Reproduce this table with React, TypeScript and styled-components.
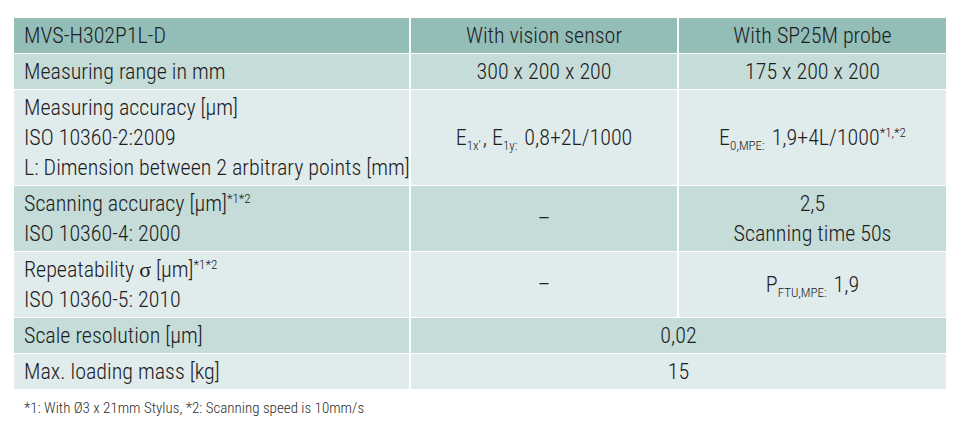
import React from "react";
import styled, {createGlobalStyle} from "styled-components";

const GlobalStyle = createGlobalStyle`
  html, body {
    margin: 0;
    padding: 0;
    background: #ffffff;
  }
  body {
    font-family: "Roboto Condensed", "Liberation Sans Narrow", "Liberation Sans", sans-serif;
    font-weight: 300;
    color: #1c201e;
  }
`

const Page = styled.div`
  padding: 17px 20px 0 14px;
`

const SpecTable = styled.table`
  width: 932px;
  border-collapse: collapse;
  table-layout: fixed;
  font-size: 22px;
  line-height: 30px;
`

type Tone = 'head' | 'mid' | 'light'

const tones: Record<Tone, string> = {
    head: '#93bdb7',
    mid: '#c5dcd8',
    light: '#e0ebeb',
}

const Row = styled.tr<{ $tone: Tone }>`
  background-color: ${props => tones[props.$tone]};
`

const Cell = styled.td<{ $center?: boolean }>`
  border: 2px solid #ffffff;
  border-top-width: 1px;
  border-bottom-width: 1px;
  padding: 3px 10px 2px;
  text-align: ${props => props.$center ? 'center' : 'left'};
  vertical-align: middle;
  white-space: nowrap;

  &:first-child {
    border-left: none;
  }
  &:last-child {
    border-right: none;
  }
`

const Sub = styled.span`
  font-size: 13px;
  line-height: 1;
  position: relative;
  top: 5px;
  margin-right: 2px;
`

const Sup = styled.span`
  font-size: 13px;
  line-height: 1;
  position: relative;
  top: -8px;
`

const Sigma = styled.span`
  font-family: "Liberation Serif", serif;
  font-size: 22px;
  line-height: 1;
`

const Footnote = styled.p`
  margin: 8px 0 0 10px;
  font-size: 15px;
  line-height: 20px;
  color: #2a2e2c;
`

export default function App() {
    return (
        <Page>
            <GlobalStyle/>
            <SpecTable>
                <colgroup>
                    <col style={{width: 396}}/>
                    <col style={{width: 268}}/>
                    <col style={{width: 268}}/>
                </colgroup>
                <tbody>
                <Row $tone="head">
                    <Cell>MVS-H302P1L-D</Cell>
                    <Cell $center>With vision sensor</Cell>
                    <Cell $center>With SP25M probe</Cell>
                </Row>
                <Row $tone="mid">
                    <Cell>Measuring range in mm</Cell>
                    <Cell $center>300 x 200 x 200</Cell>
                    <Cell $center>175 x 200 x 200</Cell>
                </Row>
                <Row $tone="light">
                    <Cell>
                        Measuring accuracy [µm]<br/>
                        ISO 10360-2:2009<br/>
                        L: Dimension between 2 arbitrary points [mm]
                    </Cell>
                    <Cell $center>E<Sub>1x'</Sub>, E<Sub>1y:</Sub> 0,8+2L/1000</Cell>
                    <Cell $center>E<Sub>0,MPE:</Sub> 1,9+4L/1000<Sup>*1,*2</Sup></Cell>
                </Row>
                <Row $tone="mid">
                    <Cell>
                        Scanning accuracy [µm]<Sup>*1*2</Sup><br/>
                        ISO 10360-4: 2000
                    </Cell>
                    <Cell $center>–</Cell>
                    <Cell $center>2,5<br/>Scanning time 50s</Cell>
                </Row>
                <Row $tone="light">
                    <Cell>
                        Repeatability <Sigma>σ</Sigma> [µm]<Sup>*1*2</Sup><br/>
                        ISO 10360-5: 2010
                    </Cell>
                    <Cell $center>–</Cell>
                    <Cell $center>P<Sub>FTU,MPE:</Sub> 1,9</Cell>
                </Row>
                <Row $tone="mid">
                    <Cell>Scale resolution [µm]</Cell>
                    <Cell $center colSpan={2}>0,02</Cell>
                </Row>
                <Row $tone="light">
                    <Cell>Max. loading mass [kg]</Cell>
                    <Cell $center colSpan={2}>15</Cell>
                </Row>
                </tbody>
            </SpecTable>
            <Footnote>*1: With Ø3 x 21mm Stylus, *2: Scanning speed is 10mm/s</Footnote>
        </Page>
    )
}
